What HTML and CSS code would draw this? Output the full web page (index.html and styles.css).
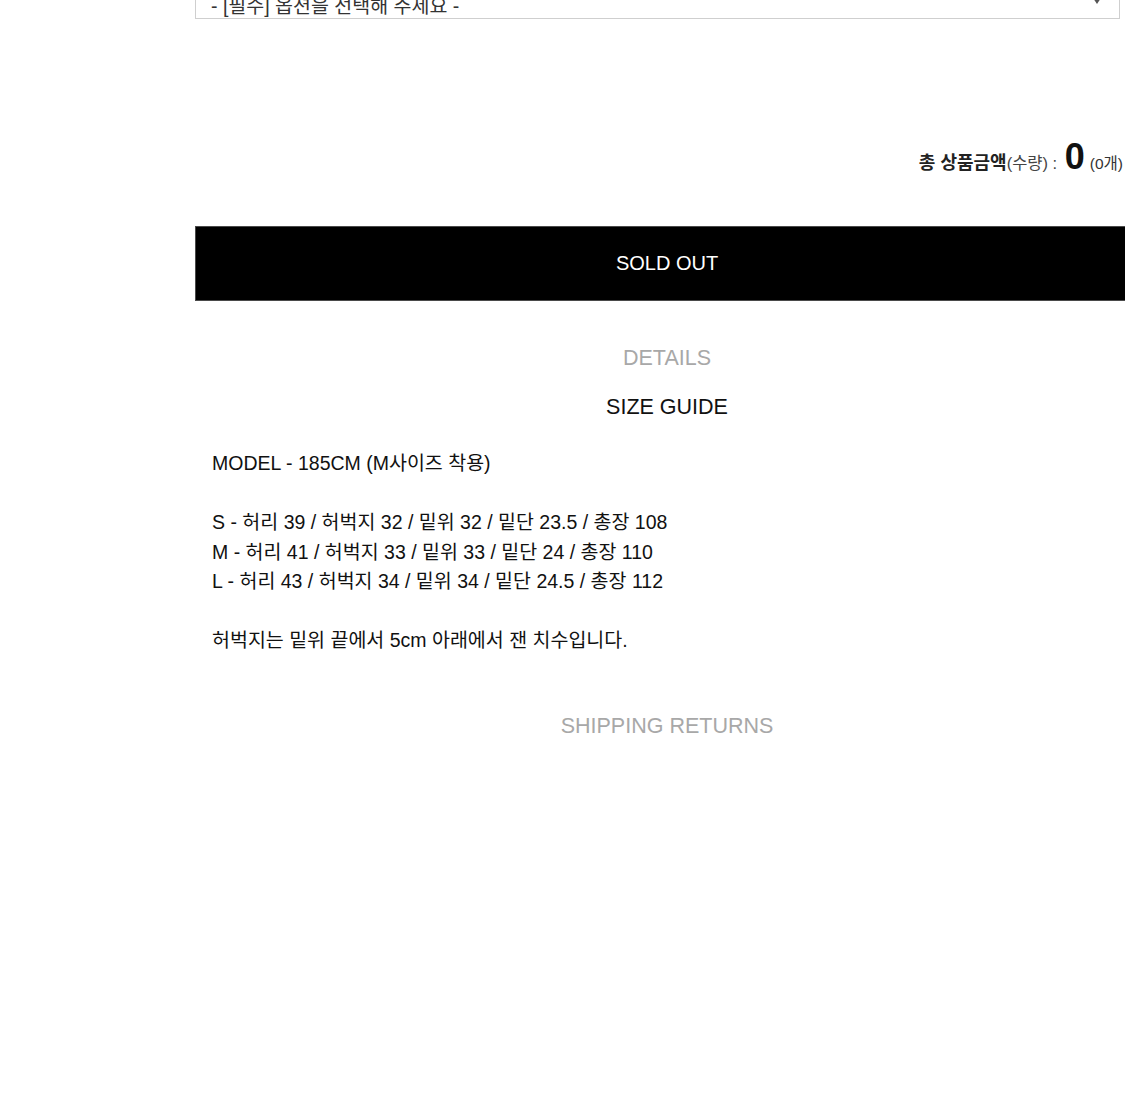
FILE: index.html
```
<!DOCTYPE html>
<html lang="ko">
<head>
<meta charset="utf-8">
<title>Product</title>
<link rel="stylesheet" href="styles.css">
</head>
<body>
<div class="page">
  <div class="col">
    <div class="select">
      <span class="select-text">- [필수] 옵션을 선택해 주세요 -</span>
      <svg class="select-arrow" width="8" height="6" viewBox="0 0 8 6"><path d="M0 0 L8 0 L4 6 Z" fill="#555"/></svg>
    </div>
    <div class="total">
      <strong class="total-label">총 상품금액</strong><span class="total-qty">(수량) : </span><strong class="total-num">0</strong><span class="total-count">(0개)</span>
    </div>
    <button class="soldout">SOLD OUT</button>
    <div class="tabs">
      <div class="tab muted">DETAILS</div>
      <div class="tab active">SIZE GUIDE</div>
      <div class="panel">
        <p class="line">MODEL - 185CM (M사이즈 착용)</p>
        <p class="line empty">&nbsp;</p>
        <p class="line">S - 허리 39 / 허벅지 32 / 밑위 32 / 밑단 23.5 / 총장 108</p>
        <p class="line">M - 허리 41 / 허벅지 33 / 밑위 33 / 밑단 24 / 총장 110</p>
        <p class="line">L - 허리 43 / 허벅지 34 / 밑위 34 / 밑단 24.5 / 총장 112</p>
        <p class="line empty">&nbsp;</p>
        <p class="line">허벅지는 밑위 끝에서 5cm 아래에서 잰 치수입니다.</p>
      </div>
      <div class="tab muted ship">SHIPPING RETURNS</div>
    </div>
  </div>
</div>
</body>
</html>
```
FILE: styles.css
```
html, body {
  margin: 0;
  padding: 0;
  overflow: hidden;
  background: #fff;
}
body {
  font-family: "Liberation Sans", Arial, "Noto Sans CJK KR", sans-serif;
  color: #111;
}
.page {
  width: 1125px;
  height: 1094px;
  overflow: hidden;
}
.col {
  margin-left: 195px;
  width: 944px;
  margin-top: -13px;
}
.select {
  box-sizing: border-box;
  width: 925px;
  height: 32px;
  border: 1px solid #cfcfcf;
  display: flex;
  align-items: center;
  justify-content: space-between;
  padding: 0 18px 0 15px;
  font-size: 19.5px;
  line-height: 24px;
  color: #333;
}
.select-text {
  margin-top: 5px;
}
.select-arrow {
  margin-top: -4px;
}
.total {
  margin-top: 118px;
  display: flex;
  justify-content: flex-end;
  align-items: baseline;
  padding-right: 16px;
  line-height: 40px;
  color: #222;
}
.total-label {
  font-size: 18px;
  font-weight: bold;
}
.total-qty {
  font-size: 16.5px;
  color: #444;
  white-space: pre;
}
.total-num {
  font-size: 36px;
  font-weight: bold;
  color: #111;
  margin: 0 5px 0 3px;
}
.total-count {
  font-size: 15.5px;
  color: #333;
}
.soldout {
  display: block;
  box-sizing: border-box;
  width: 944px;
  height: 75px;
  margin: 42px 0 0 0;
  background: #000;
  border: 1px solid #4a4a4a;
  color: #fff;
  font-family: "Liberation Sans", Arial, sans-serif;
  font-size: 20px;
  padding: 0;
}
.tabs {
  display: flex;
  flex-direction: column;
  margin-top: 42px;
}
.tab {
  text-align: center;
  font-size: 21.5px;
  line-height: 30px;
}
.tab.muted {
  color: #a8a8a8;
}
.tab.active {
  color: #111;
  margin-top: 19px;
}
.panel {
  margin-top: 27px;
  padding-left: 17px;
}
.line {
  margin: 0;
  font-size: 19.5px;
  line-height: 29.5px;
  color: #111;
}
.tab.ship {
  margin-top: 55px;
}
```
